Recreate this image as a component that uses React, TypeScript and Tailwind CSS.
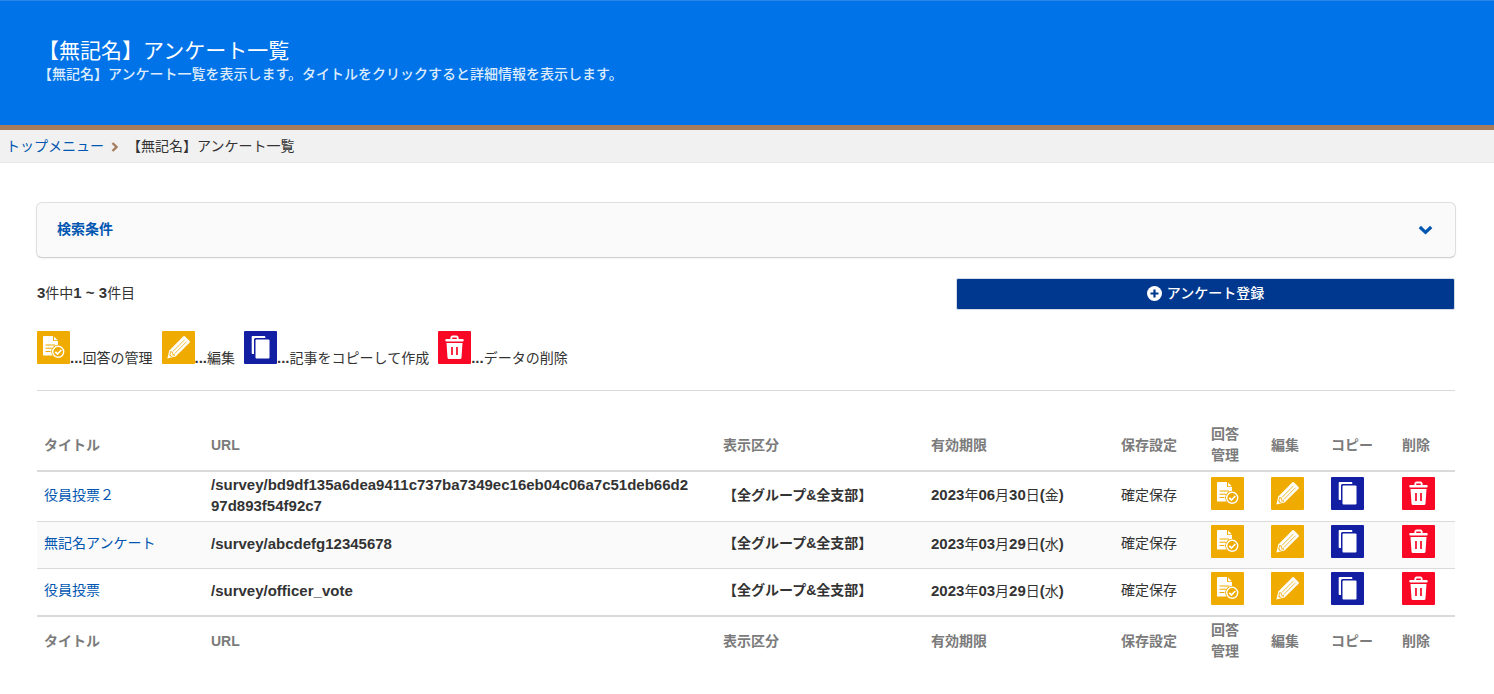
import React from 'react';
import clsx from 'clsx';

type IconKind = 'answer' | 'edit' | 'copy' | 'remove';

type Survey = {
  title: string;
  url: string;
  target: string;
  expires: string;
  saveMode: string;
};

const surveys: Survey[] = [
  {
    title: '役員投票２',
    url: '/survey/bd9df135a6dea9411c737ba7349ec16eb04c06a7c51deb66d297d893f54f92c7',
    target: '【全グループ&全支部】',
    expires: '2023年06月30日(金)',
    saveMode: '確定保存',
  },
  {
    title: '無記名アンケート',
    url: '/survey/abcdefg12345678',
    target: '【全グループ&全支部】',
    expires: '2023年03月29日(水)',
    saveMode: '確定保存',
  },
  {
    title: '役員投票',
    url: '/survey/officer_vote',
    target: '【全グループ&全支部】',
    expires: '2023年03月29日(水)',
    saveMode: '確定保存',
  },
];

const legend: { kind: IconKind; label: string }[] = [
  { kind: 'answer', label: '回答の管理' },
  { kind: 'edit', label: '編集' },
  { kind: 'copy', label: '記事をコピーして作成' },
  { kind: 'remove', label: 'データの削除' },
];

const actions: { kind: IconKind; label: string }[] = [
  { kind: 'answer', label: '回答管理' },
  { kind: 'edit', label: '編集' },
  { kind: 'copy', label: 'コピー' },
  { kind: 'remove', label: '削除' },
];

const iconFill: Record<IconKind, string> = {
  answer: '#f0ab00',
  edit: '#f0ab00',
  copy: '#121fa3',
  remove: '#f80824',
};

const ActionIcon: React.FC<{ kind: IconKind }> = ({ kind }) => {
  const bg = iconFill[kind];

  return (
    <svg width="33" height="33" viewBox="0 0 33 33" className="block shrink-0" aria-hidden="true">
      <rect width="33" height="33" rx="1" fill={bg} />
      {kind === 'answer' && (
        <>
          <path d="M7 5h9v5h5v14.500h-14.500a.5.5 0 0 1-.5-.5v-18a1 1 0 0 1 1-1z" fill="#fff" />
          <path d="M17 5.500l3.800 3.700h-3.800z" fill="#fff" />
          <path d="M8.500 14h9.500M8.500 17.300h6.500M8.500 20.500h5" stroke={bg} strokeWidth="1.100" />
          <circle cx="21.200" cy="20.800" r="7" fill={bg} />
          <circle cx="21.200" cy="20.800" r="5.500" fill={bg} stroke="#fff" strokeWidth="1.400" />
          <path d="M18.300 20.800l2.200 2.200 3.800-4" fill="none" stroke="#fff" strokeWidth="1.800" />
        </>
      )}
      {kind === 'edit' && (
        <>
          <path
            d="M5.300 27.600l2-8.200L21.200 5.500a1.300 1.300 0 0 1 1.800 0l4.500 4.500a1.300 1.300 0 0 1 0 1.800L13.600 25.600z"
            fill="#fff"
          />
          <path d="M10.800 20.600L22.600 8.800M12.800 22.500L24.600 10.700" stroke={bg} strokeWidth=".8" />
          <path d="M8.300 20.200l-1 4 1.500 1.500 4-1c.2-1.500-.8-2.200-1.900-1.900.2-1.500-.7-2.600-2.600-2.600z" fill={bg} />
          <path d="M8.900 21l-.6 2.800 1.200 1.200 2.700-.6c-.2-.8-1.200-1-2-.7.3-1.200-.2-2.300-1.300-2.700z" fill="#fff" />
        </>
      )}
      {kind === 'copy' && (
        <>
          <path d="M8.500 5h12a.8.8 0 0 1 .8.8v1.200h-9.800a1.500 1.500 0 0 0-1.500 1.500v14.500h-1.500a.8.8 0 0 1-.8-.8V5.800a.8.8 0 0 1 .8-.8z" fill="#fff" />
          <rect x="11.500" y="8.500" width="14" height="19" rx="1" fill="#fff" />
        </>
      )}
      {kind === 'remove' && (
        <>
          <path
            d="M13.300 8.500V6.800a1.300 1.300 0 0 1 1.300-1.300h3.800a1.300 1.300 0 0 1 1.300 1.300v1.700"
            fill="none"
            stroke="#fff"
            strokeWidth="1.800"
          />
          <path d="M8.500 8h16a1 1 0 0 1 0 2.500h-16a1 1 0 0 1 0-2.500z" fill="#fff" />
          <path d="M8.500 12h16l-1 14.500a1.500 1.500 0 0 1-1.500 1.500h-11a1.500 1.500 0 0 1-1.500-1.500z" fill="#fff" />
          <path d="M14 16v8M19 16v8" stroke={bg} strokeWidth="1.700" />
        </>
      )}
    </svg>
  );
};

// 英数字だけ太字で一回り大きく表示する
const LatinBold: React.FC<{ text: string }> = ({ text }) => (
  <>
    {text.split(/([\x20-\x7e]+)/).map((part, i) =>
      i % 2 === 1 ? (
        <b key={i} className="text-[15px] font-bold">
          {part}
        </b>
      ) : (
        part
      )
    )}
  </>
);

const HeadingRow: React.FC<{ className?: string }> = ({ className }) => (
  <tr className={clsx('border-[#dadada] text-left text-[#7b7b7b]', className)}>
    <th className="px-[7px] pt-[3px] pb-1">タイトル</th>
    <th className="px-[7px] pt-[3px] pb-1">URL</th>
    <th className="px-[7px] pt-[3px] pb-1">表示区分</th>
    <th className="px-[7px] pt-[3px] pb-1">有効期限</th>
    <th className="px-[7px] pt-[3px] pb-1">保存設定</th>
    <th className="px-[7px] pt-[3px] pb-1">
      回答
      <br />
      管理
    </th>
    <th className="px-[7px] pt-[3px] pb-1">編集</th>
    <th className="px-[7px] pt-[3px] pb-1">コピー</th>
    <th className="px-[7px] pt-[3px] pb-1">削除</th>
  </tr>
);

const App: React.FC = () => {
  return (
    <div className="min-h-screen bg-white font-['Liberation_Sans','Noto_Sans_CJK_JP',sans-serif] text-sm leading-[21px] text-[#333]">
      <header className="border-t border-b-5 border-t-[#2b86e6] border-b-[#a67c5b] bg-[#0073e9] px-[38px] pt-[37px] pb-10 text-white">
        <h1 className="text-[21px] leading-[26px]">【無記名】アンケート一覧</h1>
        <p className="font-medium text-[#dcecfc]">
          【無記名】アンケート一覧を表示します。タイトルをクリックすると詳細情報を表示します。
        </p>
      </header>

      <nav className="flex items-center border-b border-[#e6e6e6] bg-[#f1f1f1] px-[6px] pt-[6px] pb-[5px]">
        <a href="#" className="text-[#0056b0]">
          トップメニュー
        </a>
        <svg width="7" height="10" viewBox="0 0 7 10" className="mr-[9px] ml-[7px]" aria-hidden="true">
          <path d="M1.500 1l4 4-4 4" fill="none" stroke="#a67c5b" strokeWidth="2.400" />
        </svg>
        <span>【無記名】アンケート一覧</span>
      </nav>

      <main className="pt-[39px] pr-[39px] pb-6 pl-[37px]">
        <button
          type="button"
          className="-mx-px flex w-[calc(100%+2px)] items-center justify-between rounded-md border border-[#dedede] border-b-[#cfcfcf] bg-[#fafafa] pt-4 pr-[22px] pb-[17px] pl-5 font-bold text-[#0056b0] shadow-xs"
        >
          検索条件
          <svg width="15" height="10" viewBox="0 0 15 10" aria-hidden="true">
            <path d="M1.800 2l5.700 5.300L13.200 2" fill="none" stroke="#0056b0" strokeWidth="3.200" />
          </svg>
        </button>

        <div className="mt-5 flex items-start justify-between">
          <p className="pt-1">
            <LatinBold text="3件中1 ~ 3件目" />
          </p>
          <button
            type="button"
            className="flex w-[35.2%] items-center justify-center gap-[5px] rounded-xs border border-[#d5dbe6] bg-[#00388f] pt-1 pb-[5px] font-medium text-white"
          >
            <svg width="15" height="15" viewBox="0 0 15 15" aria-hidden="true">
              <circle cx="7.500" cy="7.500" r="7.500" fill="#fff" />
              <path d="M7.500 3.500v8M3.500 7.500h8" stroke="#00388f" strokeWidth="2.200" />
            </svg>
            アンケート登録
          </button>
        </div>

        <ul className="mt-[21px] flex items-end gap-[9px] border-b border-[#dadada] pb-[26px]">
          {legend.map(item => (
            <li key={item.kind} className="flex items-end">
              <ActionIcon kind={item.kind} />
              <span className="-mb-[5px] block">
                <LatinBold text={`...${item.label}`} />
              </span>
            </li>
          ))}
        </ul>

        <table className="mt-[30px] w-full table-fixed border-collapse">
          <colgroup>
            <col className="w-[167px]" />
            <col />
            <col className="w-[208px]" />
            <col className="w-[190px]" />
            <col className="w-[90px]" />
            <col className="w-[60px]" />
            <col className="w-[60px]" />
            <col className="w-[71px]" />
            <col className="w-[60px]" />
          </colgroup>
          <thead>
            <HeadingRow className="border-b-2" />
          </thead>
          <tbody>
            {surveys.map((survey, i) => (
              <tr key={survey.url} className={clsx('border-[#dadada]', i > 0 && 'border-t', i % 2 === 1 && 'bg-[#fafafa]')}>
                <td className="px-[7px] pb-[3px]">
                  <a href="#" className="text-[#0056b0]">
                    {survey.title}
                  </a>
                </td>
                <td className="pt-[2px] pr-6 pb-[5px] pl-[7px] text-[15px] font-bold break-all">{survey.url}</td>
                <td className="px-[7px] pb-[3px] font-bold">{survey.target}</td>
                <td className="px-[7px] pb-[3px]">
                  <LatinBold text={survey.expires} />
                </td>
                <td className="px-[7px] pb-[3px]">{survey.saveMode}</td>
                {actions.map(action => (
                  <td key={action.kind} className="px-[7px] pt-[3px] pb-[10px]">
                    <button type="button" aria-label={`${survey.title} ${action.label}`} className="block">
                      <ActionIcon kind={action.kind} />
                    </button>
                  </td>
                ))}
              </tr>
            ))}
          </tbody>
          <tfoot>
            <HeadingRow className="border-t-2" />
          </tfoot>
        </table>
      </main>
    </div>
  );
};

export default App;
